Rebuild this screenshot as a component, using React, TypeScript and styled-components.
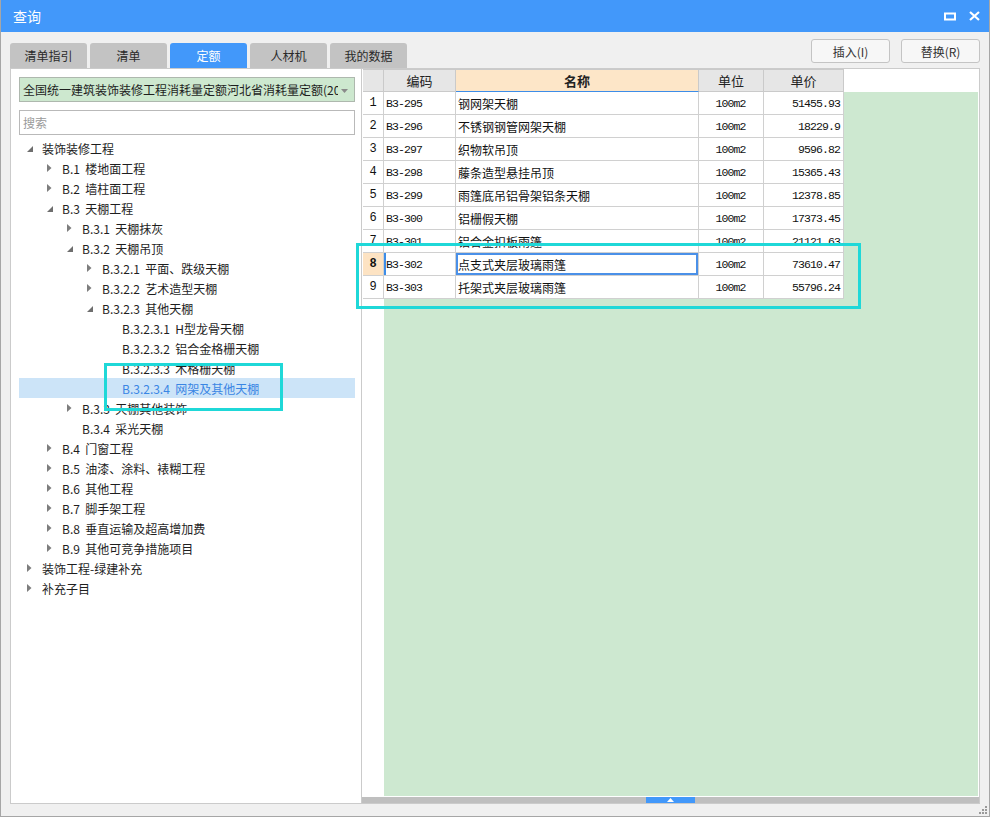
import React from "react";
import styled, { createGlobalStyle, css } from "styled-components";

const GlobalStyle = createGlobalStyle`
    html, body {
        margin: 0;
        padding: 0;
        background: #ffffff;
    }
    * {
        box-sizing: border-box;
    }
    body {
        font-family: "Noto Sans CJK SC", "Noto Sans", sans-serif;
        font-size: 12px;
        color: #222;
    }
`;

const CJK = `"Noto Sans CJK SC", "Noto Sans", sans-serif`;
const MONO = `"Liberation Mono", "Noto Sans CJK SC", monospace`;

const Window = styled.div`
    position: relative;
    width: 990px;
    height: 817px;
    display: flex;
    flex-direction: column;
    background: #f0f0f0;
    border: 1px solid #a6a6a6;
    border-top: none;
`;

const TitleBar = styled.div`
    height: 32px;
    flex: none;
    display: flex;
    align-items: center;
    justify-content: space-between;
    padding: 0 9px 0 12px;
    background: #4298fa;
    color: #fff;
    font-family: ${CJK};
    font-size: 14px;
`;

const TitleTools = styled.div`
    display: flex;
    align-items: center;
    gap: 13px;
`;

const Body = styled.div`
    flex: 1;
    display: flex;
    flex-direction: column;
    padding: 0 9px 12px 9px;
    min-height: 0;
`;

const TopRow = styled.div`
    height: 36px;
    flex: none;
    display: flex;
    justify-content: space-between;
`;

const Tabs = styled.div`
    display: flex;
    align-items: flex-end;
    gap: 3px;
`;

const Tab = styled.div<{ $active?: boolean }>`
    width: 77px;
    height: 25px;
    display: flex;
    align-items: center;
    justify-content: center;
    border-radius: 3px 3px 0 0;
    font-family: ${CJK};
    font-size: 12px;
    background: ${(p) => (p.$active ? "#4298fa" : "#c3c3c3")};
    color: ${(p) => (p.$active ? "#fff" : "#2a2a2a")};
`;

const Buttons = styled.div`
    display: flex;
    gap: 11px;
    padding-top: 7px;
`;

const Button = styled.div`
    width: 79px;
    height: 24px;
    display: flex;
    align-items: center;
    justify-content: center;
    background: #f7f7f7;
    border: 1px solid #c4c4c4;
    border-radius: 3px;
    font-family: ${CJK};
    font-size: 12px;
    color: #333;
`;

const Main = styled.div`
    flex: 1;
    display: flex;
    min-height: 0;
`;

const LeftPanel = styled.div`
    width: 352px;
    flex: none;
    display: flex;
    flex-direction: column;
    background: #fff;
    border: 1px solid #cbcbcb;
    padding: 8px 6px 0 8px;
`;

const Select = styled.div`
    position: relative;
    height: 25px;
    display: flex;
    align-items: center;
    padding: 0 16px 0 3px;
    background: #cde8cf;
    border: 1px solid #aeb8ae;
    font-family: ${CJK};
    font-size: 12px;
    color: #1e1e1e;
    white-space: nowrap;
    overflow: hidden;
`;

const SelectText = styled.span`
    overflow: hidden;
    flex: 1;
`;

const SelectArrow = styled.svg`
    position: absolute;
    right: 6px;
    top: 11px;
`;

const Search = styled.div`
    height: 25px;
    margin-top: 8px;
    display: flex;
    align-items: center;
    padding-left: 3px;
    border: 1px solid #b9b9b9;
    font-family: ${CJK};
    font-size: 12px;
    color: #9a9a9a;
`;

const Tree = styled.div`
    margin-top: 3px;
    display: flex;
    flex-direction: column;
`;

const TreeRow = styled.div<{ $level: number; $selected?: boolean }>`
    height: 20px;
    display: flex;
    align-items: center;
    padding-left: ${(p) => 8 + p.$level * 20}px;
    font-family: ${CJK};
    font-size: 12px;
    white-space: pre;
    color: ${(p) => (p.$selected ? "#3a86e4" : "#1e1e1e")};
    background: ${(p) => (p.$selected ? "#cce4f8" : "transparent")};
`;

const Toggle = styled.span`
    width: 15px;
    flex: none;
    display: flex;
    align-items: center;
`;

const RightPanel = styled.div`
    flex: 1;
    display: flex;
    flex-direction: column;
    background: #fff;
    border: 1px solid #cbcbcb;
    border-left: none;
    min-width: 0;
`;

const GridArea = styled.div`
    flex: 1;
    display: flex;
    flex-direction: column;
    padding-left: 1px;
    min-height: 0;
`;

const COLS = "21px 72px 243px 65px 80px";

const GridRow = styled.div`
    display: grid;
    grid-template-columns: ${COLS};
    height: 23px;
`;

const HeaderCell = styled.div<{ $focus?: boolean }>`
    display: flex;
    align-items: center;
    justify-content: center;
    border-right: 1px solid #cacaca;
    border-bottom: 1px solid #cacaca;
    border-top: 1px solid #cacaca;
    background: ${(p) => (p.$focus ? "#fde6c8" : "#e6e6e6")};
    font-family: ${CJK};
    font-size: 13px;
    font-weight: ${(p) => (p.$focus ? 700 : 400)};
    color: #222;
    ${(p) =>
        p.$focus &&
        css`
            border-bottom: 1px solid #3d8de8;
        `}
`;

const GridBody = styled.div`
    flex: 1;
    background: linear-gradient(
        to right,
        #fff 21px,
        #cde8d0 21px,
        #cde8d0 calc(100% - 1px),
        #fff calc(100% - 1px)
    );
    margin-bottom: 1px;
`;

type Align = "left" | "center" | "right";

const Cell = styled.div<{ $align?: Align; $mono?: boolean }>`
    display: flex;
    align-items: center;
    justify-content: ${(p) =>
        p.$align === "right" ? "flex-end" : p.$align === "center" ? "center" : "flex-start"};
    padding: 0 3px 0 2px;
    background: #fff;
    border-right: 1px solid #d0d0d0;
    border-bottom: 1px solid #d0d0d0;
    font-family: ${(p) => (p.$mono ? MONO : CJK)};
    font-size: ${(p) => (p.$mono ? "11.5px" : "12px")};
    letter-spacing: ${(p) => (p.$mono ? "-0.9px" : "0")};
    white-space: nowrap;
    overflow: hidden;
    color: #111;
`;

const NumCell = styled(Cell)<{ $current?: boolean }>`
    justify-content: center;
    padding: 0;
    background: ${(p) => (p.$current ? "#fde3c3" : "#fff")};
    font-weight: ${(p) => (p.$current ? 700 : 400)};
    font-size: 12px;
    letter-spacing: 0;
`;

const CodeCell = styled(Cell)<{ $current?: boolean }>`
    ${(p) =>
        p.$current &&
        css`
            box-shadow: inset 2px 0 0 #3d8de8;
        `}
`;

const NameCell = styled(Cell)<{ $current?: boolean }>`
    ${(p) =>
        p.$current &&
        css`
            box-shadow: inset 0 0 0 2px #4a90e8;
        `}
`;

const ScrollBar = styled.div`
    height: 6px;
    flex: none;
    display: flex;
    justify-content: center;
    background: #bfbfbf;
`;

const Thumb = styled.div`
    width: 49px;
    background: #4298fa;
    display: flex;
    justify-content: center;
    align-items: center;
`;

const Highlight = styled.div<{ $x: number; $y: number; $w: number; $h: number }>`
    position: absolute;
    left: ${(p) => p.$x}px;
    top: ${(p) => p.$y}px;
    width: ${(p) => p.$w}px;
    height: ${(p) => p.$h}px;
    border: 3px solid #1fd8d8;
    pointer-events: none;
`;

const Grip = styled.svg`
    position: absolute;
    right: 2px;
    bottom: 2px;
`;

type Node = { level: number; text: string; state?: "open" | "closed"; selected?: boolean };

const tree: Node[] = [
    { level: 0, text: "装饰装修工程", state: "open" },
    { level: 1, text: "B.1  楼地面工程", state: "closed" },
    { level: 1, text: "B.2  墙柱面工程", state: "closed" },
    { level: 1, text: "B.3  天棚工程", state: "open" },
    { level: 2, text: "B.3.1  天棚抹灰", state: "closed" },
    { level: 2, text: "B.3.2  天棚吊顶", state: "open" },
    { level: 3, text: "B.3.2.1  平面、跌级天棚", state: "closed" },
    { level: 3, text: "B.3.2.2  艺术造型天棚", state: "closed" },
    { level: 3, text: "B.3.2.3  其他天棚", state: "open" },
    { level: 4, text: "B.3.2.3.1  H型龙骨天棚" },
    { level: 4, text: "B.3.2.3.2  铝合金格栅天棚" },
    { level: 4, text: "B.3.2.3.3  木格栅天棚" },
    { level: 4, text: "B.3.2.3.4  网架及其他天棚", selected: true },
    { level: 2, text: "B.3.3  天棚其他装饰", state: "closed" },
    { level: 2, text: "B.3.4  采光天棚" },
    { level: 1, text: "B.4  门窗工程", state: "closed" },
    { level: 1, text: "B.5  油漆、涂料、裱糊工程", state: "closed" },
    { level: 1, text: "B.6  其他工程", state: "closed" },
    { level: 1, text: "B.7  脚手架工程", state: "closed" },
    { level: 1, text: "B.8  垂直运输及超高增加费", state: "closed" },
    { level: 1, text: "B.9  其他可竞争措施项目", state: "closed" },
    { level: 0, text: "装饰工程-绿建补充", state: "closed" },
    { level: 0, text: "补充子目", state: "closed" },
];

const rows = [
    ["B3-295", "钢网架天棚", "100m2", "51455.93"],
    ["B3-296", "不锈钢钢管网架天棚", "100m2", "18229.9"],
    ["B3-297", "织物软吊顶", "100m2", "9596.82"],
    ["B3-298", "藤条造型悬挂吊顶", "100m2", "15365.43"],
    ["B3-299", "雨篷底吊铝骨架铝条天棚", "100m2", "12378.85"],
    ["B3-300", "铝栅假天棚", "100m2", "17373.45"],
    ["B3-301", "铝合金扣板雨篷", "100m2", "21121.63"],
    ["B3-302", "点支式夹层玻璃雨篷", "100m2", "73610.47"],
    ["B3-303", "托架式夹层玻璃雨篷", "100m2", "55796.24"],
];

function Arrow({ state }: { state?: "open" | "closed" }) {
    if (state === "closed") {
        return (
            <svg width="5" height="8" viewBox="0 0 5 8">
                <polygon points="0,0 4.5,4 0,8" fill="#7d7d7d" />
            </svg>
        );
    }
    if (state === "open") {
        return (
            <svg width="6" height="7" viewBox="0 0 6 7" style={{ marginTop: 2 }}>
                <polygon points="6,0 6,6 0,6" fill="#6e6e6e" />
            </svg>
        );
    }
    return null;
}

export default function App() {
    return (
        <Window>
            <GlobalStyle />
            <TitleBar>
                <span>查询</span>
                <TitleTools>
                    <svg width="12" height="9" viewBox="0 0 12 9">
                        <rect x="1" y="1.5" width="10" height="6" fill="none" stroke="#fff" strokeWidth="2" />
                    </svg>
                    <svg width="11" height="10" viewBox="0 0 11 10">
                        <path d="M1 1 L10 9 M10 1 L1 9" stroke="#fff" strokeWidth="2.2" />
                    </svg>
                </TitleTools>
            </TitleBar>
            <Body>
                <TopRow>
                    <Tabs>
                        <Tab>清单指引</Tab>
                        <Tab>清单</Tab>
                        <Tab $active>定额</Tab>
                        <Tab>人材机</Tab>
                        <Tab>我的数据</Tab>
                    </Tabs>
                    <Buttons>
                        <Button>插入(I)</Button>
                        <Button>替换(R)</Button>
                    </Buttons>
                </TopRow>
                <Main>
                    <LeftPanel>
                        <Select>
                            <SelectText>全国统一建筑装饰装修工程消耗量定额河北省消耗量定额(2012)</SelectText>
                            <SelectArrow width="7" height="4" viewBox="0 0 7 4">
                                <polygon points="0,0 7,0 3.5,4" fill="#8a8a8a" />
                            </SelectArrow>
                        </Select>
                        <Search>搜索</Search>
                        <Tree>
                            {tree.map((n) => (
                                <TreeRow key={n.text} $level={n.level} $selected={n.selected}>
                                    <Toggle>
                                        <Arrow state={n.state} />
                                    </Toggle>
                                    {n.text}
                                </TreeRow>
                            ))}
                        </Tree>
                    </LeftPanel>
                    <RightPanel>
                        <GridArea>
                            <GridRow>
                                <HeaderCell />
                                <HeaderCell>编码</HeaderCell>
                                <HeaderCell $focus>名称</HeaderCell>
                                <HeaderCell>单位</HeaderCell>
                                <HeaderCell>单价</HeaderCell>
                            </GridRow>
                            <GridBody>
                                {rows.map((r, i) => {
                                    const current = i === 7;
                                    return (
                                        <GridRow key={r[0]}>
                                            <NumCell $mono $current={current}>
                                                {i + 1}
                                            </NumCell>
                                            <CodeCell $mono $current={current}>
                                                {r[0]}
                                            </CodeCell>
                                            <NameCell $current={current}>{r[1]}</NameCell>
                                            <Cell $mono $align="center">
                                                {r[2]}
                                            </Cell>
                                            <Cell $mono $align="right">
                                                {r[3]}
                                            </Cell>
                                        </GridRow>
                                    );
                                })}
                            </GridBody>
                        </GridArea>
                        <ScrollBar>
                            <Thumb>
                                <svg width="7" height="4" viewBox="0 0 7 4">
                                    <polygon points="3.5,0 7,4 0,4" fill="#fff" />
                                </svg>
                            </Thumb>
                        </ScrollBar>
                    </RightPanel>
                </Main>
            </Body>
            <Highlight $x={355} $y={243} $w={505} $h={66} />
            <Highlight $x={103} $y={363} $w={179} $h={48} />
            <Grip width="9" height="9" viewBox="0 0 9 9">
                <rect x="7" y="1" width="2" height="2" fill="#9a9a9a" />
                <rect x="4" y="4" width="2" height="2" fill="#9a9a9a" />
                <rect x="7" y="4" width="2" height="2" fill="#9a9a9a" />
                <rect x="1" y="7" width="2" height="2" fill="#9a9a9a" />
                <rect x="4" y="7" width="2" height="2" fill="#9a9a9a" />
                <rect x="7" y="7" width="2" height="2" fill="#9a9a9a" />
            </Grip>
        </Window>
    );
}
